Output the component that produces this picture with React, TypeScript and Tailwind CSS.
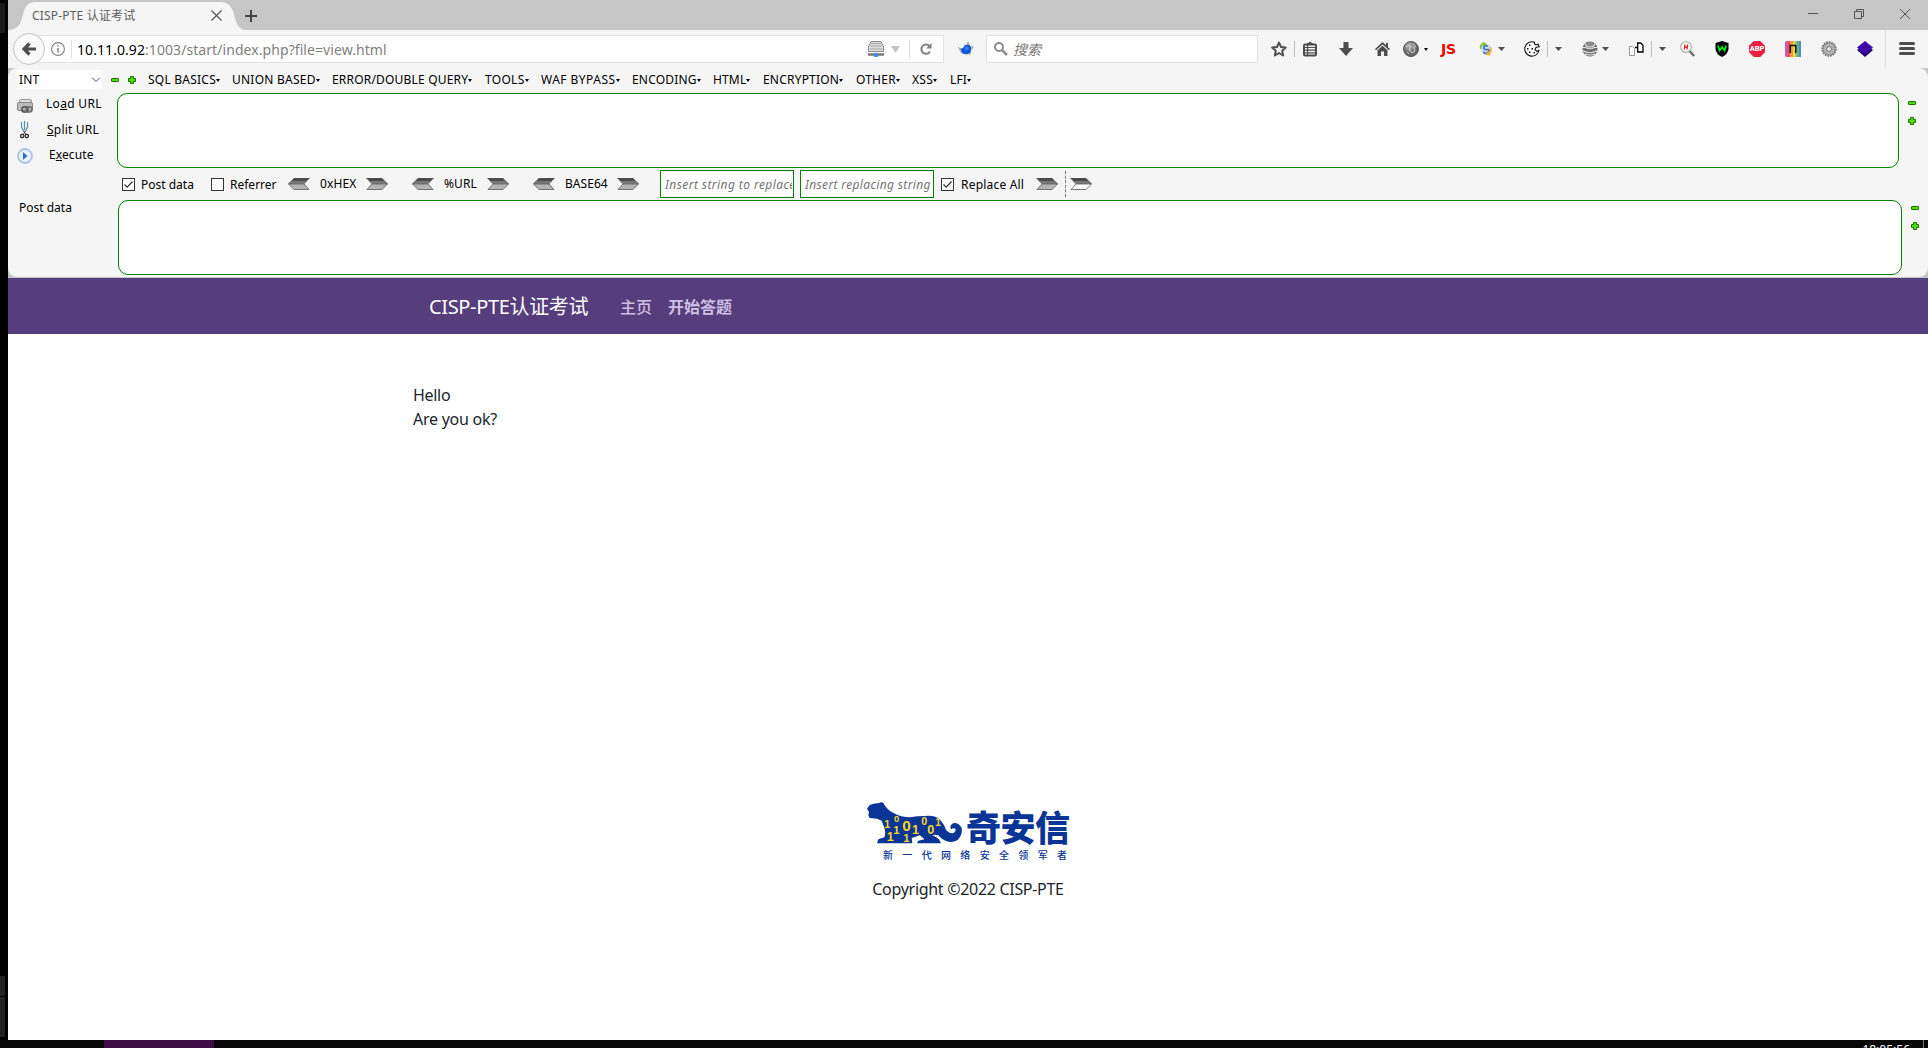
import React from "react";

const UI = "font-['Noto_Sans','Noto_Sans_CJK_SC',sans-serif]";

type P = { className?: string };

const Tri = ({ className = "" }: P) => (
  <svg className={`shrink-0 ${className}`} width="7" height="4" viewBox="0 0 7 4"><path d="M0 0h7L3.5 4z" fill="#4d4d4d" /></svg>
);
const Sep = ({ className = "" }: P) => <div className={`w-px h-4 shrink-0 bg-[#bfbfbf] ${className}`} />;

const Minus = ({ className = "" }: P) => (
  <svg className={`shrink-0 ${className}`} width="8" height="8" viewBox="0 0 8 8"><rect x=".5" y="2.5" width="7" height="3" rx=".5" fill="#4be000" stroke="#1f7000" /></svg>
);
const Plus = ({ className = "" }: P) => (
  <svg className={`shrink-0 ${className}`} width="8" height="8" viewBox="0 0 8 8"><path d="M2.5.5h3v2h2v3h-2v2h-3v-2h-2v-3h2z" fill="#4be000" stroke="#1f7000" strokeLinejoin="round" /></svg>
);

const Arrow = ({ className = "", flip = false, hollow = false }: P & { flip?: boolean; hollow?: boolean }) => (
  <svg className={`shrink-0 ${className}`} width="22" height="12" viewBox="0 0 22 12">
    <g transform={flip ? "translate(22 0) scale(-1 1)" : undefined}>
      <path d="M0 0h16l6 6H6z" fill="#4c4c4c" />
      <path d="M3 3h16l3 3H6z" fill="#777" />
      <path d="M6 6h15.5l-5.5 5.500H1z" fill={hollow ? "#fff" : "#b4b4b4"} stroke="#666" strokeWidth=".9" />
    </g>
  </svg>
);

const Check = ({ on = false, className = "" }: P & { on?: boolean }) => (
  <svg className={`shrink-0 ${className}`} width="13" height="13" viewBox="0 0 13 13">
    <rect x=".5" y=".5" width="12" height="12" fill="#fff" stroke="#333" />
    {on && <path d="M2.5 6.5l2.7 2.7 5.3-5.7" fill="none" stroke="#333" strokeWidth="1.2" />}
  </svg>
);

const menus: [string, string, string][] = [
  ["SQL BASICS", "w-[84px]", "tracking-[0.23px]"],
  ["UNION BASED", "w-[100px]", "tracking-[0.24px]"],
  ["ERROR/DOUBLE QUERY", "w-[153px]", "tracking-[0.19px]"],
  ["TOOLS", "w-[56px]", "tracking-[0.3px]"],
  ["WAF BYPASS", "w-[91px]", "tracking-[0.47px]"],
  ["ENCODING", "w-[81px]", "tracking-[0.2px]"],
  ["HTML", "w-[50px]", "tracking-[0.15px]"],
  ["ENCRYPTION", "w-[93px]", "tracking-[0.2px]"],
  ["OTHER", "w-[56px]", "tracking-[0.22px]"],
  ["XSS", "w-[38px]", "tracking-[0.3px]"],
  ["LFI", "w-[30px]", "tracking-[0.1px]"],
];

function TitleBar() {
  return (
    <div className="flex h-[30px] bg-[#c6c6c6]">
      <div className="relative w-[238px] h-[30px] shrink-0">
        <svg className="absolute inset-0" width="238" height="30" viewBox="0 0 238 30">
          <path d="M0 30C8 30 12 26 14 18L16 11Q18 2 28 2H212Q222 2 225 11L227 18C229 26 232 30 238 30z" fill="#f5f5f5" />
        </svg>
        <div className="relative flex h-full items-center pl-6">
          <span className="mt-px w-[179px] text-[12px] leading-4 text-[#5c5c5c] tracking-[0.18px]">CISP-PTE 认证考试</span>
          <svg width="11" height="11" viewBox="0 0 11 11"><path d="M.5.5l10 10M10.500.5l-10 10" stroke="#555" strokeWidth="1.2" /></svg>
        </div>
      </div>
      <svg className="mt-[10px] -ml-px" width="12" height="12" viewBox="0 0 12 12"><path d="M6 0v12M0 6h12" stroke="#444" strokeWidth="2" /></svg>
      <div className="ml-auto mr-[18px] mt-[9px] flex gap-9">
        <svg width="10" height="10" viewBox="0 0 10 10"><path d="M0 4.500h10" stroke="#555" /></svg>
        <svg width="10" height="10" viewBox="0 0 10 10" fill="none" stroke="#555"><path d="M.5 2.500h7v7h-7zM2.500 2.500v-2h7v7h-2" /></svg>
        <svg width="10" height="10" viewBox="0 0 10 10"><path d="M0 0l10 10M10 0L0 10" stroke="#555" /></svg>
      </div>
    </div>
  );
}

function ToolbarIcons() {
  return (
    <div className="flex items-center h-[38px]">
      <svg className="ml-[13px] shrink-0" width="16" height="16" viewBox="0 0 16 16"><path d="M8 1.500l2 4.500 4.800.5-3.600 3.200 1 4.800L8 12l-4.200 2.500 1-4.800L1.200 6.500 6 6z" fill="none" stroke="#4d4d4d" strokeWidth="1.9" strokeLinejoin="round" /></svg>
      <Sep className="ml-[7px]" />
      <svg className="ml-2 shrink-0" width="14" height="16" viewBox="0 0 14 16"><path d="M4 2h1.500Q7-.5 8.500 2H10v2H4z" fill="#4d4d4d" /><rect x="1" y="3.500" width="12" height="11" rx="1" fill="#f5f5f5" stroke="#4d4d4d" strokeWidth="2" /><path d="M2 3.500h10M2 6.500h10M2 9.200h10M2 11.900h10M4.600 4v10" stroke="#4d4d4d" strokeWidth="1.2" /></svg>
      <svg className="ml-[22px] shrink-0" width="14" height="14" viewBox="0 0 14 14"><path d="M4.500 0h5v6H14l-7 8-7-8h4.500z" fill="#4d4d4d" /></svg>
      <svg className="ml-[22px] shrink-0" width="15" height="14" viewBox="0 0 15 14"><path d="M7.500 0L11 3.300V1h2v4.200L15 7l-1 1.300L7.500 2.500 1 8.300 0 7z" fill="#4d4d4d" /><path d="M7.500 3.800l5 4.500V14H9V9.500H6V14H2.500V8.300z" fill="#4d4d4d" /></svg>
      <svg className="ml-[13px] shrink-0" width="16" height="16" viewBox="0 0 16 16"><defs><radialGradient id="globe" cx=".4" cy=".3"><stop offset="0" stopColor="#bbb" /><stop offset="1" stopColor="#666" /></radialGradient></defs><circle cx="8" cy="8" r="7.500" fill="url(#globe)" stroke="#555" /><path d="M3 6l3-2 2 2-2 3 3 3 3-2-1-4 2-1M4 11l2 2M10 3l2 1" fill="none" stroke="#ccc" strokeWidth="1" /></svg>
      <svg className="ml-[5px] shrink-0" width="4" height="3" viewBox="0 0 4 3"><path d="M0 0h4L2 3z" fill="#000" /></svg>
      <span className="-mt-px ml-[13px] w-[18px] shrink-0 font-['DejaVu_Sans',sans-serif] text-[14px] leading-4 font-bold text-[#f00000] tracking-[-0.2px]">JS</span>
      <svg className="ml-5 shrink-0" width="14" height="16" viewBox="0 0 14 16"><circle cx="7" cy="8" r="5" fill="#cfe0f3" /><path d="M9 5Q5 4 4.800 6.500T8 8.500 9 11 4.500 11" fill="none" stroke="#3b6fb5" strokeWidth="1.600" /><path d="M1 8Q0 3 4 2l-.5-1.500L8 3 4.500 5.200 4 4Q2 5 2.500 8z" fill="#7ec22c" /><path d="M12 6q2 5-1 7l1 1.500-5-.5 2-4 .8 1.500q1.700-2 .7-5z" fill="#f2b232" /></svg>
      <Tri className="ml-[5px]" />
      <svg className="ml-[19px] shrink-0" width="16" height="16" viewBox="0 0 16 16"><path d="M10.500 1.200A7.200 7.200 0 1 0 15 9.500l-2.500.8L11 8.500l1-2 3.200-.8-1.200-2.500-2 .8-1.500-1z" fill="#fff" stroke="#111" strokeWidth="1.100" /><g fill="#111"><rect x="5" y="3.500" width="1.500" height="1.500" /><rect x="3" y="7" width="1.500" height="1.500" /><rect x="7.500" y="7" width="1.500" height="1.500" /><rect x="5" y="10.500" width="1.500" height="1.500" /><rect x="9.500" y="11" width="1.500" height="1.500" /></g></svg>
      <Sep className="ml-[7px]" />
      <Tri className="ml-[7px]" />
      <svg className="ml-5 shrink-0" width="16" height="16" viewBox="0 0 16 16"><circle cx="8" cy="8" r="7.600" fill="#6f6f6f" /><path d="M3 2.500Q4 6 8 6t5-3.500M0 6.500h3.500Q8 9 12.500 6.500H16M.5 9.500Q8 14 15.500 9.500M3 13q5 2 10 0" fill="none" stroke="#e5e5e5" strokeWidth="1.100" /><ellipse cx="8" cy="3" rx="3.500" ry="2" fill="#8d8d8d" /></svg>
      <Tri className="ml-1" />
      <svg className="ml-5 shrink-0" width="15" height="14" viewBox="0 0 15 14"><path d="M.5 4.500h3l2 2v7h-5z" fill="#fff" stroke="#999" /><path d="M6 5.500h2.500" stroke="#000" strokeWidth="1.500" /><path d="M8.700 1h3l2.300 2.300V10H8.700z" fill="#fff" stroke="#000" strokeWidth="1.300" /></svg>
      <Sep className="ml-[7px]" />
      <Tri className="ml-[7px]" />
      <svg className="ml-[14px] shrink-0" width="15" height="16" viewBox="0 0 15 16"><path d="M9.500 10l4.500 5" stroke="#666" strokeWidth="2.300" /><circle cx="6" cy="6" r="5.300" fill="#fff" stroke="#a5a5a5" strokeWidth="1.100" /><path d="M4.900 3.500L4.300 8.500M7.700 3.500l-.6 5M4.500 6h3" stroke="#e02020" strokeWidth="1.300" /></svg>
      <svg className="ml-5 shrink-0" width="14" height="16" viewBox="0 0 14 16"><path d="M7 0l6.500 2v6q-.5 5-6.500 8Q1 13 .5 8V2z" fill="#060606" /><path d="M3 4.500l1.500 5L7 6l2.500 3.500 1.500-5" fill="none" stroke="#00e51a" strokeWidth="1.800" /></svg>
      <div className="ml-5 grid size-4 shrink-0 place-items-center overflow-hidden bg-[#ee1c3f] font-['Roboto',sans-serif] text-[7.500px] leading-none font-extrabold text-white [clip-path:polygon(30%_0,70%_0,100%_30%,100%_70%,70%_100%,30%_100%,0_70%,0_30%)]">ABP</div>
      <svg className="ml-5 shrink-0" width="16" height="16" viewBox="0 0 16 16"><rect width="16" height="16" rx="1.500" fill="#c95ab0" /><path d="M3 0h2v16H3z" fill="#ef4e57" /><path d="M5 0h3v16H5z" fill="#f59a35" /><path d="M8 0h2v16H8z" fill="#f5d23c" /><path d="M10 0h2v16h-2z" fill="#90c850" /><path d="M12 0h2v16h-2z" fill="#49b9a5" /><path d="M14 0h2v16h-2z" fill="#6a80b8" /><path d="M5.200 12V4.500h5.600V12" fill="none" stroke="#111" strokeWidth="1.500" /></svg>
      <svg className="ml-5 shrink-0" width="16" height="16" viewBox="0 0 16 16"><circle cx="8" cy="8" r="6.700" fill="#aaa" stroke="#777" strokeWidth="2.200" strokeDasharray="1.700 .9" /><circle cx="8" cy="8" r="5" fill="#b5b5b5" /><circle cx="8" cy="8" r="2.500" fill="#e4e4e4" stroke="#777" /></svg>
      <svg className="ml-5 shrink-0" width="16" height="16" viewBox="0 0 16 16"><path d="M0 9l8-5 8 5-8 7z" fill="#220070" /><path d="M0 6.500L8 0l8 6.500L8 13z" fill="#4408aa" /></svg>
      <div className="ml-3 h-[38px] w-px shrink-0 bg-[#dcdcdc]" />
      <div className="-mt-[2px] ml-[13px] flex w-4 shrink-0 flex-col gap-[2px]">
        <div className="h-[3px] rounded-full bg-[#4d4d4d]" /><div className="h-[3px] rounded-full bg-[#4d4d4d]" /><div className="h-[3px] rounded-full bg-[#4d4d4d]" />
      </div>
    </div>
  );
}

function NavBar() {
  return (
    <div className="flex h-[38px] items-center bg-[#f5f5f5]">
      <div className="z-10 ml-[5px] grid size-8 shrink-0 place-items-center rounded-full border border-[#c4c4c4] bg-[#f9f9f9]">
        <svg width="14" height="14" viewBox="0 0 14 14"><path d="M7.500 1.500L2 7l5.500 5.500M2.500 7H14" fill="none" stroke="#4d4d4d" strokeWidth="3.200" /></svg>
      </div>
      <div className="-ml-3 flex h-7 w-[911px] shrink-0 items-center border border-[#e2e2e2] bg-white pl-[17px]">
        <svg className="shrink-0" width="14" height="14" viewBox="0 0 14 14"><circle cx="7" cy="7" r="6.400" fill="none" stroke="#808080" strokeWidth="1.100" /><path d="M7 6v4.500M7 3.200v1.500" stroke="#808080" strokeWidth="1.500" /></svg>
        <div className="ml-[6px] h-[18px] w-px bg-[#dedede]" />
        <span className="mt-px ml-[5px] w-[791px] whitespace-nowrap text-[14px] leading-5 tracking-[0.07px] text-[#7f7f7f]"><span className="text-black">10.11.0.92</span>:1003/start/index.php?file=view.html</span>
        <svg className="shrink-0" width="16" height="16" viewBox="0 0 16 16"><path d="M3 .5h10l2.500 5v5H.5v-5z" fill="#dedede" stroke="#8c8c8c" strokeLinejoin="round" /><path d="M3 2.500h10M2 5h12M1.500 8h13" stroke="#a5a5a5" /><path d="M0 13.500h16" stroke="#777" strokeWidth="2.500" /><rect x="6" y="12" width="4" height="4" rx="1" fill="#4a8de8" /></svg>
        <svg className="ml-[7px] shrink-0" width="9" height="7" viewBox="0 0 9 7"><path d="M0 0h9L4.500 7z" fill="#c4c4c4" /></svg>
        <div className="ml-[9px] h-[18px] w-px bg-[#dedede]" />
        <svg className="ml-[10px] shrink-0" width="12" height="12" viewBox="0 0 12 12"><path d="M9.500 3.200A4.600 4.600 0 1 0 10 8.500" fill="none" stroke="#808080" strokeWidth="2" /><path d="M11.500 0v5.500H6z" fill="#808080" /></svg>
      </div>
      <svg className="ml-[13px] shrink-0" width="17" height="16" viewBox="0 0 17 16"><path d="M3 8l3-1 2-3 4-.5 2.500 3-1 5.500-4 1.500-4-1z" fill="#1259d6" /><path d="M7.500 7l2.500-2 2 3-3 2z" fill="#2f80f5" /><path d="M10 4l1-3 1.500 2.500M14.500 6l1.500-.5-1 3M1 6.500l3 1.500-2 1M3 10l1.500 2M12 13l2 .5" stroke="#8a8a8a" fill="none" strokeWidth=".8" /></svg>
      <div className="ml-3 flex h-7 w-[272px] shrink-0 items-center border border-[#e2e2e2] bg-white pl-[7px]">
        <svg className="shrink-0" width="14" height="14" viewBox="0 0 14 14"><circle cx="5" cy="5" r="4" fill="none" stroke="#8c8c8c" strokeWidth="2" /><path d="M8 8l5 5" stroke="#8c8c8c" strokeWidth="2.500" /></svg>
        <span className="mt-px ml-[5px] text-[14px] leading-5 text-[#777] italic">搜索</span>
      </div>
      <ToolbarIcons />
    </div>
  );
}

function Side() {
  return (
    <div className="flex w-[109px] shrink-0 flex-col text-[12px] leading-4">
      <div className="flex h-[25px] items-center pl-[9px]">
        <svg width="16" height="16" viewBox="0 0 16 16"><rect x="2.500" y="1.500" width="12" height="5" rx="1.500" fill="#ddd" stroke="#999" /><rect x=".5" y="4.500" width="15" height="8" rx="1.500" fill="#bbb" stroke="#888" /><rect x="5" y="9" width="6" height="5" rx="2" fill="none" stroke="#444" strokeWidth="1.300" /><rect x="9" y="9" width="6" height="5" rx="2" fill="none" stroke="#666" strokeWidth="1.300" /></svg>
        <span className="ml-[13px] -mt-[3px] tracking-[0.3px]">Lo<u>a</u>d URL</span>
      </div>
      <div className="flex h-[25px] items-center pl-3">
        <svg className="-mt-[2px]" width="9" height="18" viewBox="0 0 9 18" fill="none"><path d="M1.500 1v5l2 4M4.500 0v9M7.500 1v5l-2 4" stroke="#5b8fa5" strokeWidth="1.200" /><path d="M3.500 10l2 3M5.500 10l-2 3" stroke="#333" /><circle cx="2.200" cy="15" r="1.700" stroke="#222" strokeWidth="1.200" /><circle cx="6.800" cy="15" r="1.700" stroke="#222" strokeWidth="1.200" /></svg>
        <span className="-mt-px ml-[18px] tracking-[0.2px]"><u>S</u>plit URL</span>
      </div>
      <div className="flex h-[25px] items-center pl-[9px]">
        <svg width="16" height="16" viewBox="0 0 16 16"><circle cx="8" cy="8" r="7" fill="#e9f1fb" stroke="#a9c3e4" strokeWidth="1.800" /><path d="M6 4l4.500 4L6 12z" fill="#2f6fc4" /></svg>
        <span className="-mt-px ml-4 tracking-[0.1px]">E<u>x</u>ecute</span>
      </div>
    </div>
  );
}

function HackBar() {
  return (
    <div className="h-[210px] bg-[#c6c6c6] pb-px">
      <div className="h-[209px] rounded-[9px] bg-[#f5f5f5] text-[12px] leading-4 text-black">
        <div className="flex h-[25px] items-center">
          <div className="ml-[9px] mt-[-2px] flex h-[19px] w-[85px] items-center justify-between bg-white pr-[2px] pl-[2px]">
            <span className="tracking-[0.1px]">INT</span>
            <svg width="8" height="5" viewBox="0 0 8 5"><path d="M0 .5l4 4 4-4" fill="none" stroke="#555" /></svg>
          </div>
          <Minus className="-mt-px ml-[9px]" />
          <Plus className="-mt-px ml-[9px]" />
          <div className="ml-3 -mt-px flex">
            {menus.map(([t, w, k]) => (
              <div key={t} className={`flex items-center whitespace-nowrap ${w}`}>
                <span className={k}>{t}</span>
                <svg className="mt-px shrink-0" width="4" height="3" viewBox="0 0 4 3"><path d="M0 0h4L2 3z" fill="#000" /></svg>
              </div>
            ))}
          </div>
        </div>
        <div className="flex">
          <Side />
          <div className="h-[75px] w-[1782px] shrink-0 rounded-[10px] border border-[#008000] bg-white" />
          <div className="ml-[9px] mt-[6px] flex flex-col gap-[10px]"><Minus /><Plus /></div>
        </div>
        <div className="flex h-8 items-center pl-[114px]">
          <Check on />
          <span className="mt-px ml-[6px] w-[70px]">Post data</span>
          <Check />
          <span className="mt-px ml-[6px] w-[58px]">Referrer</span>
          <Arrow flip />
          <span className="ml-[10px] w-[46px] tracking-[0.1px]">0xHEX</span>
          <Arrow />
          <Arrow flip className="ml-6" />
          <span className="ml-[10px] w-[43px] tracking-[0.1px]">%URL</span>
          <Arrow />
          <Arrow flip className="ml-6" />
          <span className="ml-[10px] w-[52px] tracking-[0.05px]">BASE64</span>
          <Arrow />
          <div className="ml-[21px] flex h-7 w-[134px] items-center border border-[#008000] bg-white pt-px pr-px pl-1 text-[#757575] italic"><span className="overflow-hidden whitespace-nowrap tracking-[0.42px]">Insert string to replace</span></div>
          <div className="ml-[6px] flex h-7 w-[134px] items-center border border-[#008000] bg-white pt-px pr-px pl-1 text-[#757575] italic"><span className="overflow-hidden whitespace-nowrap tracking-[0.35px]">Insert replacing string</span></div>
          <Check on className="ml-[7px]" />
          <span className="mt-px ml-[7px] w-[75px] tracking-[0.2px]">Replace All</span>
          <Arrow />
          <div className="ml-[7px] h-[26px] border-l border-dashed border-[#777]" />
          <Arrow hollow className="ml-1" />
        </div>
        <div className="flex">
          <div className="w-[110px] shrink-0 pl-[11px]">Post data</div>
          <div className="h-[75px] w-[1784px] shrink-0 rounded-[10px] border border-[#008000] bg-white" />
          <div className="ml-[9px] mt-1 flex flex-col gap-[10px]"><Minus /><Plus /></div>
        </div>
      </div>
    </div>
  );
}

function Logo() {
  return (
    <div className="flex w-[202px] flex-col">
      <div className="flex h-[45px]">
        <svg className="shrink-0" width="96" height="42" viewBox="0 0 288 126">
          <path d="M0 20L8 9Q22 3 34 4L42 1Q50 0 52 8 62 24 80 33 102 46 130 46 150 42 172 42 200 38 216 50 232 66 236 82 244 94 256 94 266 92 266 82 262 76 252 82 246 70 260 63 276 62 284 78 288 98 272 114 252 126 232 115 220 108 214 100 204 96 196 100 210 106 216 112L222 124H150L154 116 172 112Q166 104 158 100 150 104 134 108L136 124H30L34 112 52 106Q58 90 50 72L44 56 30 50 8 48 4 40 6 30z" fill="#0a3596" />
          <g fill="#f6d51f" fontFamily="Liberation Sans" fontWeight="bold">
            <text x="52" y="77" fontSize="32">1</text><text x="81" y="60" fontSize="28">0</text><text x="106" y="86" fontSize="46">0</text><text x="79" y="96" fontSize="34">1</text><text x="59" y="118" fontSize="38">1</text><text x="109" y="120" fontSize="34">1</text><text x="135" y="97" fontSize="38">1</text><text x="163" y="70" fontSize="32">0</text><text x="181" y="97" fontSize="38">0</text><text x="205" y="72" fontSize="30">1</text>
          </g>
        </svg>
        <span className="ml-[3px] mt-[5px] whitespace-nowrap font-['Noto_Sans_CJK_SC',sans-serif] text-[35px] leading-[38px] font-black tracking-[-0.5px] text-[#0a3596]">奇安信</span>
      </div>
      <div className="ml-4 flex justify-between pr-[2px] font-['Noto_Sans_CJK_SC',sans-serif] text-[10px] leading-4 font-medium text-[#0a3596]">
        {Array.from("新一代网络安全领军者").map((c) => <span key={c}>{c}</span>)}
      </div>
    </div>
  );
}

export default function App() {
  return (
    <div className={`flex h-[1048px] w-[1928px] flex-col overflow-hidden bg-black ${UI}`}>
      <div className="flex h-[1040px] shrink-0">
        <div className="flex w-2 shrink-0 flex-col bg-black">
          <div className="mt-[3px] h-[30px] w-[5px] bg-[#1b1b1b]" />
          <div className="mt-auto h-5 w-[5px] bg-[#222]" />
          <div className="mt-px mb-[3px] h-10 w-[5px] bg-[#222]" />
        </div>
        <div className="flex w-[1920px] flex-col bg-white">
          <TitleBar />
          <NavBar />
          <HackBar />
          <div className="flex h-14 shrink-0 items-center bg-[#563d7c] pl-[421px]">
            <span className="mt-px w-[191px] whitespace-nowrap text-[20px] leading-[30px] tracking-[-0.35px] text-white">CISP-PTE认证考试</span>
            <span className="mt-px w-12 text-[16px] leading-6 font-medium text-[#cdbfe3]">主页</span>
            <span className="mt-px text-[16px] leading-6 font-bold text-[#cdbfe3]">开始答题</span>
          </div>
          <div className="pt-[49px] pl-[405px] text-[16px] leading-6 text-[#212529]">
            <p className="tracking-[-0.3px]">Hello</p>
            <p className="tracking-[-0.25px]">Are you ok?</p>
          </div>
          <div className="mt-[371px] flex flex-col items-center text-[16px] leading-6 text-[#212529]">
            <Logo />
            <p className="mt-[14px] tracking-[-0.3px]">Copyright ©2022 CISP-PTE</p>
          </div>
        </div>
      </div>
      <div className="flex h-2 shrink-0 overflow-hidden bg-[#060606]">
        <div className="ml-[104px] h-2 w-[110px] bg-[#3f0d45]" />
        <span className="mt-[2px] ml-auto mr-[13px] text-[12px] leading-4 text-white">18:05:56</span>
        <div className="mr-1 h-2 w-px bg-[#777]" />
      </div>
    </div>
  );
}
